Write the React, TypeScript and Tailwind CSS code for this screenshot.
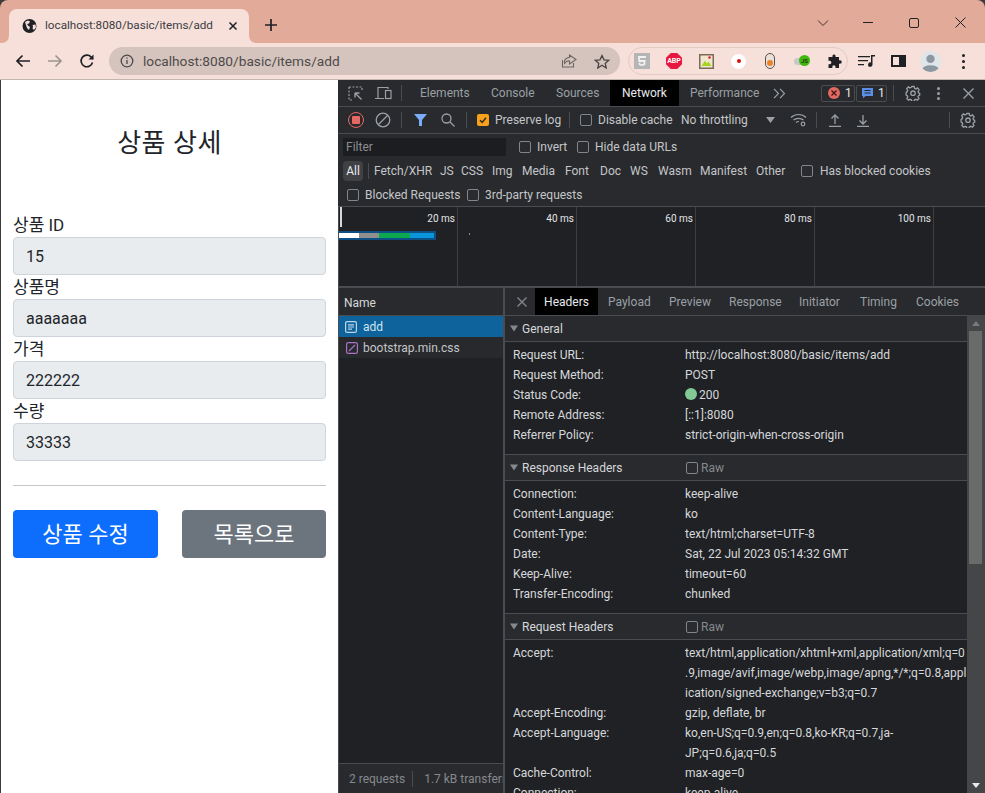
import React from "react";

const ui = "font-['Roboto','Noto_Sans_CJK_KR',sans-serif]";

const Checkbox = ({ checked }: { checked?: boolean }) =>
  checked ? (
    <span className="flex h-3 w-3 shrink-0 items-center justify-center rounded-[2px] bg-[#f9a11b]">
      <svg width="10" height="10" viewBox="0 0 10 10" fill="none" stroke="#3a2a10" strokeWidth="1.5">
        <path d="M2 5.2 4.2 7.4 8 2.8" />
      </svg>
    </span>
  ) : (
    <span className="h-3 w-3 shrink-0 rounded-[2px] border border-[#80868b] bg-[#2a2b2e]" />
  );

const Gear = ({ color = "#9aa0a6" }: { color?: string }) => (
  <svg width="16" height="16" viewBox="0 0 16 16" fill="none" stroke={color} strokeWidth="1.3">
    <path d="M6.8 1.5h2.400l.4 1.800 1.300.6 1.600-1 1.600 1.900-1 1.500.4 1.400 1.200.6v1.800l-1.200.6-.5 1.300 1 1.500-1.600 1.700-1.600-.9-1.300.5-.5 1.700H6.800l-.5-1.700-1.300-.5-1.600.9-1.600-1.700 1-1.500-.5-1.300-1.200-.6V7.300l1.200-.6.4-1.400-1-1.500 1.600-1.900 1.600 1 1.300-.6z" />
    <circle cx="8" cy="8.200" r="2.200" />
  </svg>
);

const Sep = ({ className = "" }: { className?: string }) => (
  <span className={`h-4 w-px shrink-0 bg-[#4a4c50] ${className}`} />
);

const Field = ({ label, value }: { label: string; value: string }) => (
  <div className="flex flex-col">
    <label className="h-[24px] text-[17px] leading-[24px] text-[#212529]">{label}</label>
    <div className="flex h-[38px] items-center rounded-[4px] border border-[#ced4da] bg-[#e9ecef] px-[12px] pt-px text-[16px] text-[#212529]">
      {value}
    </div>
  </div>
);

const PagePane = () => (
  <div className={`flex w-[337px] shrink-0 flex-col bg-white px-[12px] ${ui}`}>
    <h2 className="mt-[45px] mb-[52px] text-center text-[26px] leading-[36px] tracking-[0.5px] text-[#212529]">상품 상세</h2>
    <div className="flex flex-col">
      <Field label="상품 ID" value="15" />
      <Field label="상품명" value="aaaaaaa" />
      <Field label="가격" value="222222" />
      <Field label="수량" value="33333" />
    </div>
    <hr className="mt-[24px] mb-[24px] border-[#c8c8c8]" />
    <div className="flex justify-between">
      <button className="h-[48px] w-[145px] rounded-[4px] bg-[#0d6efd] text-[22px] text-white">상품 수정</button>
      <button className="h-[48px] w-[144px] rounded-[4px] bg-[#6c757d] text-[22px] text-white">목록으로</button>
    </div>
  </div>
);

const TabStrip = () => (
  <div className="flex h-[43px] shrink-0 items-end rounded-t-[8px] bg-[#e2aa99] pl-[9px]">
    <svg width="8" height="8" viewBox="0 0 8 8" fill="#f6e0d9" className="-ml-[8px] shrink-0">
      <path d="M8 0Q8 8 0 8H8z" />
    </svg>
    <div className="flex h-[34px] w-[240px] items-center rounded-t-[8px] bg-[#f6e0d9] pl-[13px] pr-[11px]">
      <svg width="16" height="16" viewBox="0 0 16 16" className="shrink-0">
        <circle cx="7.500" cy="8" r="7" fill="#202124" />
        <path d="M3 4l3-1.500 2 1-1 2-2 .5 1.500 2 1.500 1-1 3-2-2-1-3zM10.500 7l3-.5.500 3-2 2.500-1.500-1.500.5-2z" fill="#f6e0d9" />
      </svg>
      <span className="ml-[7px] flex-1 truncate text-[11.7px] text-[#3c3c43]">localhost:8080/basic/items/add</span>
      <svg width="10" height="10" viewBox="0 0 10 10" stroke="#202124" strokeWidth="1.500" className="shrink-0">
        <path d="M1.500 1.500l7 7M8.500 1.500l-7 7" />
      </svg>
    </div>
    <svg width="8" height="8" viewBox="0 0 8 8" fill="#f6e0d9" className="-mr-[8px] shrink-0">
      <path d="M0 0Q0 8 8 8H0z" />
    </svg>
    <svg width="14" height="14" viewBox="0 0 14 14" stroke="#202124" strokeWidth="1.700" className="mb-[11px] ml-[15px]">
      <path d="M7 1v12M1 7h12" />
    </svg>
    <div className="mb-[15px] ml-auto flex items-center">
      <svg width="12" height="8" viewBox="0 0 12 8" fill="none" stroke="#3c3030" strokeWidth="1">
        <path d="M1 1.500l5 5 5-5" />
      </svg>
      <span className="ml-[34px] h-px w-[10px] bg-[#202124]" />
      <span className="ml-[36px] h-[10px] w-[10px] rounded-[2px] border border-[#202124]" />
      <svg width="11" height="11" viewBox="0 0 11 11" stroke="#202124" strokeWidth="1" className="ml-[36px] mr-[19px]">
        <path d="M.5.500l10 10M10.500.500l-10 10" />
      </svg>
    </div>
  </div>
);

const AddressBar = () => (
  <div className="flex h-[37px] shrink-0 items-center border-b border-[#c3b5af] bg-[#f6e0d9] pl-[15px]">
    <svg width="16" height="14" viewBox="0 0 16 14" fill="none" stroke="#202124" strokeWidth="1.700" className="shrink-0">
      <path d="M15 7H2M7.500 1.500 2 7l5.500 5.500" />
    </svg>
    <svg width="16" height="14" viewBox="0 0 16 14" fill="none" stroke="#9c9490" strokeWidth="1.700" className="ml-[16px] shrink-0">
      <path d="M1 7h13M8.500 1.500 14 7l-5.500 5.500" />
    </svg>
    <svg width="16" height="16" viewBox="0 0 16 16" fill="none" stroke="#202124" strokeWidth="1.700" className="ml-[16px] shrink-0">
      <path d="M13.500 9.500A5.800 5.800 0 1 1 12 3.800L14 6" />
      <path d="M14.500 1.500V6.500H9.500" fill="#202124" stroke="none" />
    </svg>
    <div className="ml-[14px] flex h-[28px] w-[511px] shrink-0 items-center rounded-full bg-[#d4c4bd] pl-[11px] pr-[10px]">
      <svg width="14" height="14" viewBox="0 0 14 14" fill="none" stroke="#4a4a4c" strokeWidth="1.300">
        <circle cx="7" cy="7" r="5.800" />
        <path d="M7 6v4M7 3.600v1.200" />
      </svg>
      <span className="ml-[9px] text-[13.7px] text-[#4f4a4a]">localhost:8080/basic/items/add</span>
      <svg width="16" height="14" viewBox="0 0 16 14" fill="none" stroke="#6b6461" strokeWidth="1.100" className="ml-auto">
        <path d="M1.500 6v7h11V9M8.500 1v2.500C4.500 3.500 3 6.500 3.500 9.500 5 7.500 6.500 6.500 8.500 7v3L15 5.500z" />
      </svg>
      <svg width="16" height="15" viewBox="0 0 16 15" fill="none" stroke="#4a4544" strokeWidth="1.300" className="ml-[17px]">
        <path d="M8 1.500l2 4.300 4.700.5-3.500 3.100 1 4.600L8 11.200l-4.200 2.800 1-4.600L1.300 6.300 6 5.800z" />
      </svg>
    </div>
    <div className="ml-[8px] flex h-[28px] w-[220px] shrink-0 items-center rounded-full border border-[#e2cbc3] pl-[5px]">
      <svg width="16" height="16" viewBox="0 0 16 16" className="shrink-0">
        <rect width="16" height="16" fill="#b5b5b5" />
        <path d="M4 3h8l-.2 2H6l.1 2h5.500l-.4 5L8 13l-3.200-1-.2-2.200h1.700l.1 1L8 11.300l1.500-.5.100-1.800H4.500z" fill="#f1f1f1" />
      </svg>
      <span className="ml-[16px] flex h-4 w-4 shrink-0 items-center justify-center bg-[#e8173f] text-[7px] font-bold text-white [clip-path:polygon(30%_0,70%_0,100%_30%,100%_70%,70%_100%,30%_100%,0_70%,0_30%)]">ABP</span>
      <svg width="15" height="15" viewBox="0 0 15 15" className="ml-[17px] shrink-0">
        <rect x=".75" y=".75" width="13.500" height="13.500" fill="#f1e7cf" stroke="#7a6a58" strokeWidth="1.500" />
        <path d="M2.500 12 6 6.500l2 3 1.500-2L12.500 12z" fill="#a6d321" />
        <circle cx="10.500" cy="3.500" r="1.300" fill="#e8173f" />
      </svg>
      <span className="ml-[17px] flex h-[15px] w-[15px] shrink-0 items-center justify-center rounded-full bg-white">
        <span className="h-1 w-1 rounded-full bg-[#d80f0f]" />
      </span>
      <span className="ml-[19px] flex h-[16px] w-[10px] shrink-0 items-end justify-center rounded-full border border-[#5b5351] bg-[#e9e0dc] pb-[2px]">
        <span className="h-[6px] w-[6px] rounded-full bg-[#ea8327]" />
      </span>
      <span className="relative ml-[19px] h-[7px] w-[12px] shrink-0 rounded-full bg-[#c8c8c8]">
        <span className="absolute -right-[4px] -top-[3px] flex h-[11px] w-[11px] items-center justify-center rounded-full bg-[#40b80e] text-[6px] font-bold text-[#1e3a08]">JS</span>
      </span>
      <svg width="15" height="15" viewBox="0 0 15 15" fill="#202124" className="ml-[21px] shrink-0">
        <path d="M5.500 1.500a1.600 1.600 0 0 1 3 0V3H12v3.200h1a1.800 1.800 0 0 1 0 3.600h-1V14H8.500v-1.200a1.600 1.600 0 0 0-3.200 0V14H1.500v-3.800h1.200a1.700 1.700 0 0 0 0-3.400H1.500V3h4z" />
      </svg>
    </div>
    <svg width="17" height="12" viewBox="0 0 17 12" fill="#202124" className="ml-[10px] shrink-0">
      <path d="M0 1h12v1.300H0zM0 5h10v1.300H0zM0 9h6v1.300H0zM13 0h4v1.500h-2.500V9.500a2.200 2.200 0 1 1-1.500-2z" />
    </svg>
    <span className="ml-[16px] flex h-3 w-[15px] shrink-0 justify-end border-2 border-[#202124]">
      <span className="h-full w-[5px] bg-[#202124]" />
    </span>
    <svg width="21" height="21" viewBox="0 0 20 20" className="ml-[14px] shrink-0">
      <defs>
        <clipPath id="avatar">
          <circle cx="10" cy="10" r="10" />
        </clipPath>
      </defs>
      <g clipPath="url(#avatar)">
        <rect width="20" height="20" fill="#dfe5e8" />
        <circle cx="10" cy="7.500" r="4" fill="#8c979f" />
        <ellipse cx="10" cy="18" rx="8" ry="4.500" fill="#8c979f" />
      </g>
    </svg>
    <span className="ml-[21px] flex shrink-0 flex-col gap-[3px]">
      <span className="h-[3px] w-[3px] rounded-full bg-[#202124]" />
      <span className="h-[3px] w-[3px] rounded-full bg-[#202124]" />
      <span className="h-[3px] w-[3px] rounded-full bg-[#202124]" />
    </span>
  </div>
);

const MainTabs = () => (
  <div className="flex h-[27px] shrink-0 items-center border-b border-[#494c50] pl-[10px] text-[#9aa0a6]">
    <svg width="15" height="15" viewBox="0 0 15 15" fill="none" stroke="#9aa0a6" strokeWidth="1.200" className="shrink-0">
      <path d="M1 1h13v4M1 1v13h4" strokeDasharray="2 1.500" />
      <path d="M7 7l6.500 6.500M7 7v4.500M7 7h4.500" strokeWidth="1.400" />
    </svg>
    <svg width="17" height="14" viewBox="0 0 17 14" fill="none" stroke="#9aa0a6" strokeWidth="1.200" className="ml-[12px] shrink-0">
      <path d="M0 12.500h9M3 12V1.500h10V3" />
      <rect x="10.500" y="4.500" width="5.500" height="8" />
    </svg>
    <Sep className="ml-[9px]" />
    <div className="ml-[18px] flex h-full items-center">
      <span className="w-[71px]">Elements</span>
      <span className="w-[65px]">Console</span>
      <span className="w-[54px]">Sources</span>
      <span className="flex h-full w-[69px] items-center justify-center bg-black text-[#e8eaed]">Network</span>
      <span className="ml-[11px] w-[67px]">Performance</span>
    </div>
    <svg width="13" height="11" viewBox="0 0 13 11" fill="none" stroke="#9aa0a6" strokeWidth="1.200" className="ml-[16px] shrink-0">
      <path d="M1 .8 5.500 5.500 1 10.200M7 .8l4.500 4.700L7 10.200" />
    </svg>
    <div className="ml-[35px] flex h-[17px] w-[34px] shrink-0 items-center rounded-[2px] border border-[#4a4c50] pl-[6px] text-[#e8eaed]">
      <span className="flex h-3 w-3 items-center justify-center rounded-full bg-[#e46962]">
        <svg width="6" height="6" viewBox="0 0 6 6" stroke="#3a1512" strokeWidth="1.200">
          <path d="M.5.500l5 5M5.500.500l-5 5" />
        </svg>
      </span>
      <span className="ml-[5px]">1</span>
    </div>
    <div className="ml-px flex h-[17px] w-[31px] shrink-0 items-center rounded-[2px] border border-[#4a4c50] pl-[5px] text-[#e8eaed]">
      <svg width="12" height="12" viewBox="0 0 12 12">
        <path d="M0 1h11v8H3.500L1 11.500V9H0z" fill="#5a8fe8" />
        <path d="M2.500 3.500h6M2.500 6h6" stroke="#20242c" />
      </svg>
      <span className="ml-[4px]">1</span>
    </div>
    <Sep className="ml-[6px]" />
    <span className="ml-[11px] flex shrink-0">
      <Gear />
    </span>
    <span className="ml-[16px] flex shrink-0 flex-col gap-[2px]">
      <span className="h-[3px] w-[3px] rounded-full bg-[#9aa0a6]" />
      <span className="h-[3px] w-[3px] rounded-full bg-[#9aa0a6]" />
      <span className="h-[3px] w-[3px] rounded-full bg-[#9aa0a6]" />
    </span>
    <svg width="11" height="11" viewBox="0 0 11 11" stroke="#9aa0a6" strokeWidth="1.400" className="ml-[23px] shrink-0">
      <path d="M.5.500l10 10M10.500.500l-10 10" />
    </svg>
  </div>
);

const NetworkToolbar = () => (
  <div className="flex h-[27px] shrink-0 items-center border-b border-[#494c50] pl-[10px] text-[#c3c6c9]">
    <span className="flex h-[16px] w-[16px] shrink-0 items-center justify-center rounded-full border-[1.5px] border-[#e46962]">
      <span className="h-2 w-2 rounded-[1px] bg-[#e46962]" />
    </span>
    <svg width="16" height="16" viewBox="0 0 16 16" fill="none" stroke="#9aa0a6" strokeWidth="1.300" className="ml-[11px] shrink-0">
      <circle cx="8" cy="8" r="6.800" />
      <path d="M3.500 12.500l9-9" />
    </svg>
    <Sep className="ml-[10px]" />
    <svg width="13" height="12" viewBox="0 0 13 12" fill="#7cacf8" className="ml-[12px] shrink-0">
      <path d="M0 0h13L8 6v6H5V6z" />
    </svg>
    <svg width="14" height="14" viewBox="0 0 14 14" fill="none" stroke="#9aa0a6" strokeWidth="1.300" className="ml-[14px] shrink-0">
      <circle cx="5.500" cy="5.500" r="4.500" />
      <path d="M9 9l4.500 4.500" />
    </svg>
    <Sep className="ml-[11px]" />
    <span className="ml-[10px] flex items-center gap-[6px]">
      <Checkbox checked />
      <span className="w-[65px]">Preserve log</span>
    </span>
    <Sep className="ml-[9px]" />
    <span className="ml-[10px] flex items-center gap-[6px]">
      <Checkbox />
      <span className="w-[72px]">Disable cache</span>
    </span>
    <span className="ml-[11px] w-[69px]">No throttling</span>
    <svg width="9" height="6" viewBox="0 0 9 6" fill="#9aa0a6" className="ml-[16px] shrink-0">
      <path d="M0 0h9L4.500 6z" />
    </svg>
    <svg width="17" height="14" viewBox="0 0 17 14" fill="none" stroke="#9aa0a6" strokeWidth="1.200" className="ml-[15px] shrink-0">
      <path d="M1 4.500C5 .5 12 .5 16 4.500M3.500 7C6 4.700 11 4.700 13.500 7M6 9.500c1-1 2-1 3-1" />
      <circle cx="13" cy="11" r="1.800" />
    </svg>
    <Sep className="ml-[9px]" />
    <svg width="12" height="13" viewBox="0 0 12 13" fill="none" stroke="#9aa0a6" strokeWidth="1.300" className="ml-[12px] shrink-0">
      <path d="M0 12.300h12M6 10V1M2.500 4.500 6 1l3.500 3.500" />
    </svg>
    <svg width="12" height="13" viewBox="0 0 12 13" fill="none" stroke="#9aa0a6" strokeWidth="1.300" className="ml-[16px] shrink-0">
      <path d="M0 12.300h12M6 1v9M2.500 6.500 6 10l3.500-3.500" />
    </svg>
    <Sep className="ml-[80px] mr-[10px]" />
    <span className="flex shrink-0">
      <Gear />
    </span>
  </div>
);

const filterTypes = [
  { label: "Fetch/XHR", width: "w-[66px]" },
  { label: "JS", width: "w-[21px]" },
  { label: "CSS", width: "w-[31px]" },
  { label: "Img", width: "w-[30px]" },
  { label: "Media", width: "w-[43px]" },
  { label: "Font", width: "w-[35px]" },
  { label: "Doc", width: "w-[30px]" },
  { label: "WS", width: "w-[28px]" },
  { label: "Wasm", width: "w-[42px]" },
  { label: "Manifest", width: "w-[56px]" },
  { label: "Other", width: "w-[45px]" },
];

const FilterBar = () => (
  <div className="flex h-[73px] shrink-0 flex-col border-b border-[#494c50] pt-px text-[#c3c6c9]">
    <div className="flex h-[24px] shrink-0 items-center pl-[5px]">
      <span className="flex h-[18px] w-[163px] items-center bg-[#1c1d20] pl-[3px] text-[#8a8e92]">Filter</span>
      <span className="ml-[13px] flex items-center gap-[6px]">
        <Checkbox />
        <span className="w-[31px]">Invert</span>
      </span>
      <span className="ml-[9px] flex items-center gap-[6px]">
        <Checkbox />
        Hide data URLs
      </span>
    </div>
    <div className="flex h-[24px] shrink-0 items-center pl-[5px]">
      <span className="flex h-5 w-[20px] items-center justify-center rounded-[4px] bg-[#3f4145] text-[#e8eaed]">All</span>
      <Sep className="ml-[5px] mr-[5px]" />
      {filterTypes.map((t) => (
        <span key={t.label} className={t.width}>
          {t.label}
        </span>
      ))}
      <span className="flex items-center gap-[7px]">
        <Checkbox />
        Has blocked cookies
      </span>
    </div>
    <div className="flex h-[24px] shrink-0 items-center pl-[9px]">
      <span className="flex items-center gap-[6px]">
        <Checkbox />
        <span className="w-[92px]">Blocked Requests</span>
      </span>
      <span className="ml-[10px] flex items-center gap-[6px]">
        <Checkbox />
        3rd-party requests
      </span>
    </div>
  </div>
);

const ticks = ["20 ms", "40 ms", "60 ms", "80 ms", "100 ms"];

const Overview = () => (
  <div className="relative flex h-[81px] shrink-0 border-b-2 border-l border-[#494c50] bg-[#202124]">
    {ticks.map((t) => (
      <div key={t} className="h-full w-[119px] shrink-0 border-r border-[#3c3e42] pr-[2px] pt-[5px] text-right text-[10px] leading-[14px] text-[#e3e5e8]">
        {t}
      </div>
    ))}
    {/* handle and waterfall sit over the grid */}
    <span className="absolute left-px top-0 h-[20px] w-[2px] bg-[#d8d8d8]" />
    <div className="absolute left-0 top-[24px] flex h-[9px] w-[97px] border-y-2 border-r-2 border-[#0b4f85]">
      <span className="w-[20px] bg-white" />
      <span className="w-[20px] bg-[#8f8f8f]" />
      <span className="w-[31px] bg-[#0ba84f]" />
      <span className="w-[24px] bg-[#0a94dc]" />
    </div>
    <span className="absolute left-[130px] top-[26px] h-[2px] w-px bg-[#8a8e92]" />
  </div>
);

const NamePanel = () => (
  <div className="flex w-[167px] shrink-0 flex-col border-x border-r-2 border-[#494c50] text-[#c3c6c9]">
    <div className="flex h-[28px] shrink-0 items-center border-b border-[#494c50] bg-[#292a2d] pl-[5px] pt-[2px] text-[#d5d8db]">Name</div>
    <div className="flex h-[21px] shrink-0 items-center bg-[#0e639c] pl-[6px] pt-px text-[#cfe3f0]">
      <svg width="12" height="12" viewBox="0 0 12 12" fill="none" stroke="#bcd6e8" strokeWidth="1.200">
        <rect x=".6" y=".6" width="10.800" height="10.800" rx="1.500" />
        <path d="M3 3.800h6M3 6h6M3 8.200h4" />
      </svg>
      <span className="ml-[6px]">add</span>
    </div>
    <div className="flex h-[21px] shrink-0 items-center bg-[#28292c] pl-[7px] pt-px">
      <svg width="12" height="12" viewBox="0 0 12 12" fill="none" stroke="#a873c6" strokeWidth="1.200">
        <rect x=".6" y=".6" width="10.800" height="10.800" rx="1.500" />
        <path d="M3 9l6-6" />
      </svg>
      <span className="ml-[5px]">bootstrap.min.css</span>
    </div>
    <div className="flex-1 bg-[#202124]" />
    <div className="flex h-[30px] shrink-0 items-center overflow-hidden border-t border-[#494c50] bg-[#292a2d] pl-[10px] text-[#85898d]">
      2 requests
      <Sep className="ml-[7px] mr-[11px]" />
      1.7 kB transferred
    </div>
  </div>
);

const detailTabs = [
  { label: "Payload", width: "w-[61px]" },
  { label: "Preview", width: "w-[60px]" },
  { label: "Response", width: "w-[70px]" },
  { label: "Initiator", width: "w-[61px]" },
  { label: "Timing", width: "w-[56px]" },
  { label: "Cookies", width: "w-[41px]" },
];

const SectionHeader = ({ title, raw }: { title: string; raw?: boolean }) => (
  <div className="flex h-[27px] shrink-0 items-center border-y border-[#494c50] bg-[#292a2d] pl-[5px] text-[#d5d8db]">
    <svg width="8" height="7" viewBox="0 0 8 7" fill="#85898d">
      <path d="M0 .5h8L4 6.500z" />
    </svg>
    <span className={raw ? "ml-[4px] w-[164px]" : "ml-[4px]"}>{title}</span>
    {raw && (
      <span className="flex items-center gap-[3px] text-[#85898d]">
        <Checkbox />
        Raw
      </span>
    )}
  </div>
);

const HeaderRow = ({ name, lines }: { name: string; lines: React.ReactNode[] }) => (
  <div className="flex pl-[8px] text-[#d5d8db]">
    <span className="w-[172px] shrink-0 leading-[20px]">{name}</span>
    <div className="flex flex-col leading-[20px]">
      {lines.map((l, i) => (
        <span key={i}>{l}</span>
      ))}
    </div>
  </div>
);

const HeadersPanel = () => (
  <div className="flex min-w-0 flex-1 flex-col">
    <div className="flex h-[27px] shrink-0 items-center text-[#9aa0a6]">
      <svg width="10" height="10" viewBox="0 0 10 10" stroke="#85898d" strokeWidth="1.300" className="ml-[12px] shrink-0">
        <path d="M.5.500l9 9M9.500.500l-9 9" />
      </svg>
      <span className="ml-[8px] flex h-full w-[63px] items-center justify-center bg-black text-[#e8eaed]">Headers</span>
      <div className="ml-[10px] flex">
        {detailTabs.map((t) => (
          <span key={t.label} className={t.width}>
            {t.label}
          </span>
        ))}
      </div>
    </div>
    <div className="flex min-h-0 flex-1">
      <div className="min-w-0 flex-1 overflow-hidden bg-[#202124]">
        <SectionHeader title="General" />
        <div className="flex h-[112px] flex-col pt-[3px]">
          <HeaderRow name="Request URL:" lines={["http://localhost:8080/basic/items/add"]} />
          <HeaderRow name="Request Method:" lines={["POST"]} />
          <HeaderRow
            name="Status Code:"
            lines={[
              <span className="flex items-center">
                <span className="mb-[3px] h-3 w-3 rounded-full bg-[#81c995]" />
                <span className="ml-[2px]">200</span>
              </span>,
            ]}
          />
          <HeaderRow name="Remote Address:" lines={["[::1]:8080"]} />
          <HeaderRow name="Referrer Policy:" lines={["strict-origin-when-cross-origin"]} />
        </div>
        <SectionHeader title="Response Headers" raw />
        <div className="flex h-[132px] flex-col pt-[3px]">
          <HeaderRow name="Connection:" lines={["keep-alive"]} />
          <HeaderRow name="Content-Language:" lines={["ko"]} />
          <HeaderRow name="Content-Type:" lines={["text/html;charset=UTF-8"]} />
          <HeaderRow name="Date:" lines={["Sat, 22 Jul 2023 05:14:32 GMT"]} />
          <HeaderRow name="Keep-Alive:" lines={["timeout=60"]} />
          <HeaderRow name="Transfer-Encoding:" lines={["chunked"]} />
        </div>
        <SectionHeader title="Request Headers" raw />
        <div className="flex flex-col pt-[3px]">
          <HeaderRow
            name="Accept:"
            lines={[
              "text/html,application/xhtml+xml,application/xml;q=0",
              ".9,image/avif,image/webp,image/apng,*/*;q=0.8,appl",
              "ication/signed-exchange;v=b3;q=0.7",
            ]}
          />
          <HeaderRow name="Accept-Encoding:" lines={["gzip, deflate, br"]} />
          <HeaderRow name="Accept-Language:" lines={["ko,en-US;q=0.9,en;q=0.8,ko-KR;q=0.7,ja-", "JP;q=0.6,ja;q=0.5"]} />
          <HeaderRow name="Cache-Control:" lines={["max-age=0"]} />
          <HeaderRow name="Connection:" lines={["keep-alive"]} />
        </div>
      </div>
      <div className="flex w-[18px] shrink-0 flex-col bg-[#454648] pl-[2px] pr-[3px]">
        <div className="flex h-[16px] shrink-0 items-center justify-center">
          <svg width="8" height="5" viewBox="0 0 8 5" fill="#77797c">
            <path d="M0 5h8L4 0z" />
          </svg>
        </div>
        <div className="h-[233px] shrink-0 bg-[#6a6a6b]" />
        <div className="mt-auto flex h-[16px] shrink-0 items-center justify-center">
          <svg width="8" height="5" viewBox="0 0 8 5" fill="#e8eaed">
            <path d="M0 0h8L4 5z" />
          </svg>
        </div>
      </div>
    </div>
  </div>
);

const DevTools = () => (
  <div className={`flex min-w-0 flex-1 flex-col whitespace-nowrap bg-[#292a2d] text-[12px] ${ui}`}>
    <MainTabs />
    <NetworkToolbar />
    <FilterBar />
    <Overview />
    <div className="flex min-h-0 flex-1">
      <NamePanel />
      <HeadersPanel />
    </div>
  </div>
);

export default function App() {
  return (
    <div className={`flex h-[793px] w-[985px] flex-col overflow-hidden bg-[#3b3b3b] ${ui}`}>
      <TabStrip />
      <AddressBar />
      <div className="flex min-h-0 flex-1 pl-px">
        <PagePane />
        <DevTools />
      </div>
    </div>
  );
}
